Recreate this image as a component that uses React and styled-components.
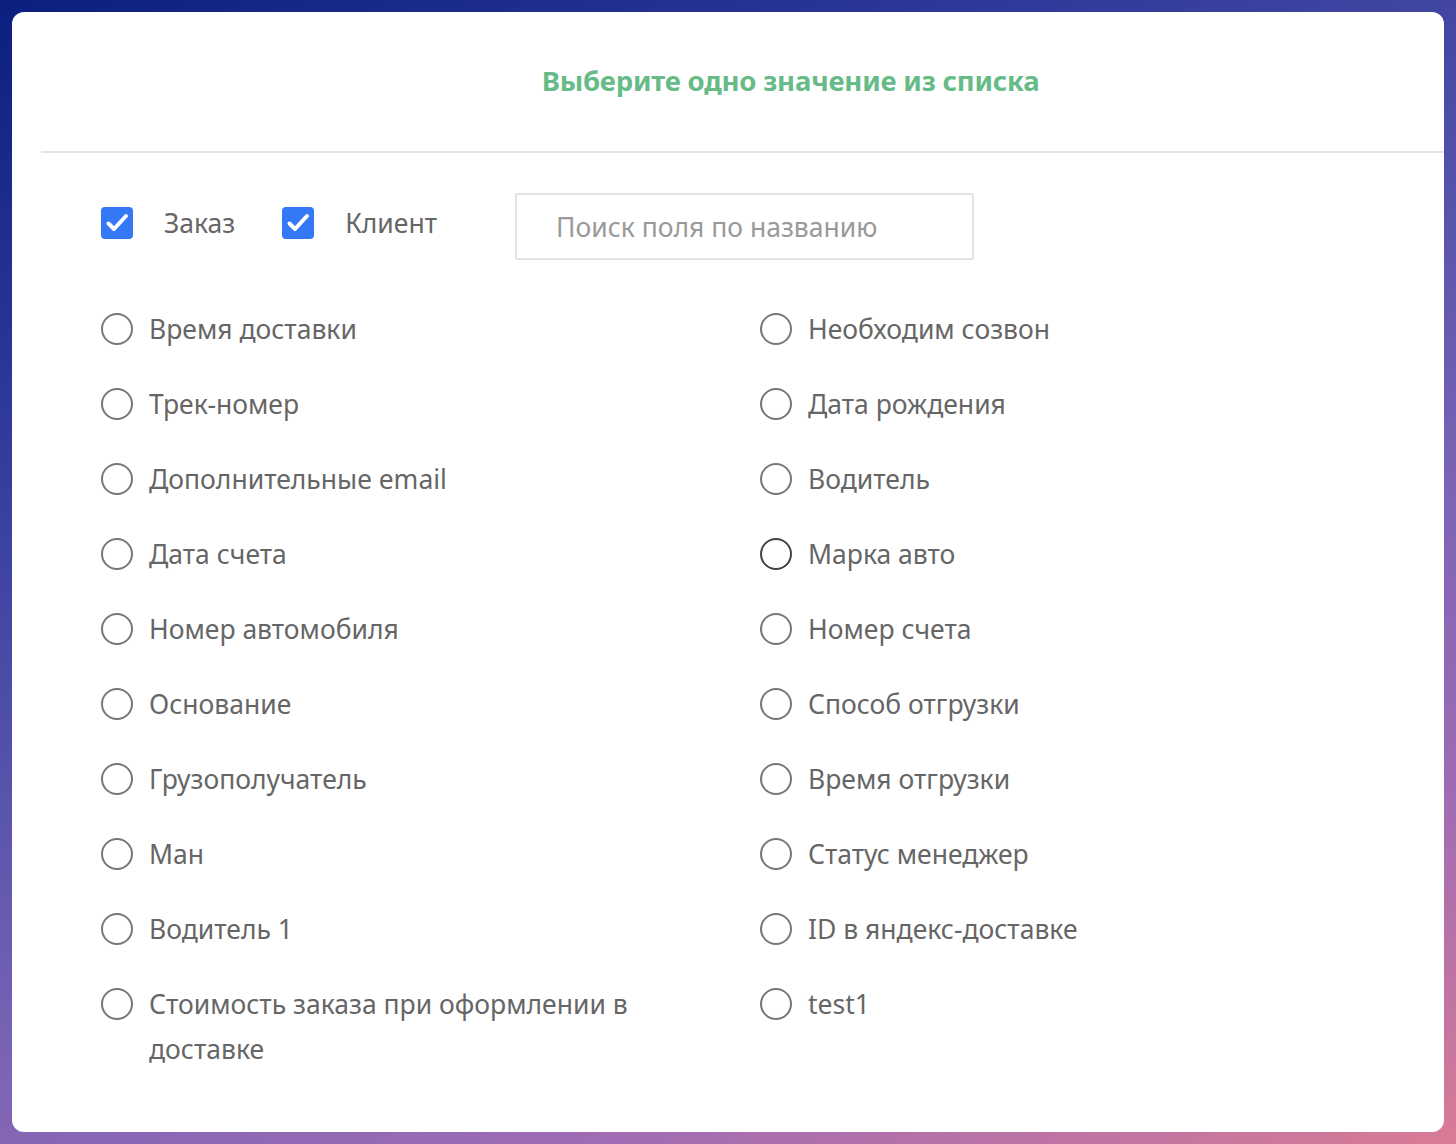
import React from "react";
import styled, { createGlobalStyle } from "styled-components";

const Global = createGlobalStyle`
  html, body { margin: 0; padding: 0; }
  body {
    font-family: "Noto Sans", "Open Sans", sans-serif;
    background: linear-gradient(158deg, #0a1f80 0%, #2c3798 22%, #5553ab 45%, #7c64b6 62%, #a06cb3 80%, #d97b95 100%);
    min-height: 1144px;
  }
  * { box-sizing: border-box; }
`;

const Page = styled.div`
  padding: 12px;
  height: 1144px;
`;

const Card = styled.div`
  background: #fff;
  border-radius: 12px;
  height: 1120px;
  overflow: hidden;
`;

const Header = styled.div`
  margin-left: 29px;
  height: 141px;
  border-bottom: 2px solid #e2e2e2;
  display: flex;
  align-items: center;
  justify-content: center;
  padding-left: 96px;
  padding-bottom: 3px;
`;

const Title = styled.h2`
  margin: 0;
  font-size: 27.5px;
  font-weight: 700;
  color: #66bb87;
  letter-spacing: -0.2px;
`;

const Body = styled.div`
  padding: 40px 0 0 89px;
`;

const Controls = styled.div`
  display: flex;
  align-items: center;
  height: 67px;
`;

const CheckLabel = styled.label`
  display: flex;
  align-items: center;
  gap: 31px;
  font-size: 26.5px;
  color: #666;
  margin-right: ${(p) => p.$mr}px;
  margin-bottom: 8px;
`;

const Box = styled.span`
  width: 32px;
  height: 32px;
  border-radius: 4px;
  background: #3478f6;
  display: flex;
  align-items: center;
  justify-content: center;
`;

const Search = styled.input`
  width: 459px;
  height: 67px;
  border: 2px solid #e3e3e3;
  border-radius: 2px;
  padding: 0 0 0 39px;
  font-family: inherit;
  font-size: 26.5px;
  color: #555;
  outline: none;
  &::placeholder { color: #999; }
`;

const Grid = styled.div`
  display: grid;
  grid-template-columns: 659px 1fr;
  row-gap: 30px;
  margin-top: 47px;
`;

const Option = styled.label`
  display: flex;
  align-items: flex-start;
  gap: 16px;
  padding-right: 40px;
`;

const Radio = styled.span`
  flex: none;
  width: 32px;
  height: 32px;
  margin-top: 6px;
  border-radius: 50%;
  border: 2px solid ${(p) => (p.$dark ? "#444" : "#777")};
`;

const OptionText = styled.span`
  font-size: 26.5px;
  line-height: 45px;
  color: #666;
  max-width: 500px;
`;

const Check = () => (
  <svg width="24" height="24" viewBox="0 0 24 24">
    <path d="M3.5 12.5l5.5 5.5L21 5" fill="none" stroke="#fff" strokeWidth="4" strokeLinecap="round" strokeLinejoin="round" />
  </svg>
);

const left = [
  "Время доставки",
  "Трек-номер",
  "Дополнительные email",
  "Дата счета",
  "Номер автомобиля",
  "Основание",
  "Грузополучатель",
  "Ман",
  "Водитель 1",
  "Стоимость заказа при оформлении в доставке",
];
const right = [
  "Необходим созвон",
  "Дата рождения",
  "Водитель",
  "Марка авто",
  "Номер счета",
  "Способ отгрузки",
  "Время отгрузки",
  "Статус менеджер",
  "ID в яндекс-доставке",
  "test1",
];

export default function App() {
  const items = [];
  left.forEach((l, i) => {
    items.push({ t: l, k: "l" + i });
    items.push({ t: right[i], k: "r" + i, dark: right[i] === "Марка авто" });
  });
  return (
    <>
      <Global />
      <Page>
        <Card>
          <Header>
            <Title>Выберите одно значение из списка</Title>
          </Header>
          <Body>
            <Controls>
              <CheckLabel $mr={47}>
                <Box><Check /></Box>
                Заказ
              </CheckLabel>
              <CheckLabel $mr={78}>
                <Box><Check /></Box>
                Клиент
              </CheckLabel>
              <Search placeholder="Поиск поля по названию" />
            </Controls>
            <Grid>
              {items.map((it) => (
                <Option key={it.k}>
                  <Radio $dark={it.dark} />
                  <OptionText>{it.t}</OptionText>
                </Option>
              ))}
            </Grid>
          </Body>
        </Card>
      </Page>
    </>
  );
}
